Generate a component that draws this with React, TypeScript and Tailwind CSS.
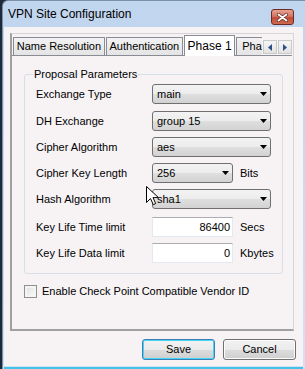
import React from 'react';

type Row = {
  label: string;
  kind: 'combo' | 'input';
  value: string;
  short?: boolean;
  unit?: string;
  mt: string;
};

const rows: Row[] = [
  { label: 'Exchange Type', kind: 'combo', value: 'main', mt: 'mt-[3px]' },
  { label: 'DH Exchange', kind: 'combo', value: 'group 15', mt: 'mt-[7px]' },
  { label: 'Cipher Algorithm', kind: 'combo', value: 'aes', mt: 'mt-[6px]' },
  { label: 'Cipher Key Length', kind: 'combo', value: '256', short: true, unit: 'Bits', mt: 'mt-[6px]' },
  { label: 'Hash Algorithm', kind: 'combo', value: 'sha1', mt: 'mt-[6px]' },
  { label: 'Key Life Time limit', kind: 'input', value: '86400', unit: 'Secs', mt: 'mt-[8px]' },
  { label: 'Key Life Data limit', kind: 'input', value: '0', unit: 'Kbytes', mt: 'mt-[6px]' },
];

const DropArrow = () => (
  <svg width="7" height="4" viewBox="0 0 7 4">
    <path d="M0 0h7L3.5 4z" fill="#000" />
  </svg>
);

const Combo = ({ value, short }: { value: string; short?: boolean }) => (
  <div
    className={`${short ? 'w-[81px]' : 'w-[119px]'} h-[20px] flex items-center justify-between pl-[4px] pr-[3px] rounded-[3px] border border-[#707070] bg-[linear-gradient(#f3f3f3_0%,#ececec_50%,#dfdfdf_50%,#d2d2d2_100%)]`}
  >
    <span>{value}</span>
    <DropArrow />
  </div>
);

const TextBox = ({ value }: { value: string }) => (
  <div className="w-[81px] h-[20px] flex items-center justify-end pr-[2px] bg-white border border-[#e3e9ef] border-t-[#abadb3]">
    {value}
  </div>
);

const Tab = ({ label, w, active }: { label: string; w: string; active?: boolean }) =>
  active ? (
    <div className={`${w} h-[21px] -mb-[1px] mr-[1px] flex items-center justify-center bg-white border border-b-0 border-[#898c95] text-[12px]`}>
      {label}
    </div>
  ) : (
    <div className={`${w} h-[18px] mr-[1px] flex items-center justify-center bg-[linear-gradient(#f2f2f2,#e4e4e4)] border border-b-0 border-[#898c95]`}>
      {label}
    </div>
  );

const ScrollBtn = ({ left }: { left?: boolean }) => (
  <div className="w-[14px] h-[14px] flex items-center justify-center bg-[linear-gradient(#f6f6f6,#e2e2e2)] border border-[#c9c9c9]">
    <svg width="4" height="7" viewBox="0 0 4 7">
      <path d={left ? 'M4 0v7L0 3.5z' : 'M0 0v7L4 3.5z'} fill="#2d4f86" />
    </svg>
  </div>
);

const WinButton = ({ label, focused }: { label: string; focused?: boolean }) => (
  <div
    className={`w-[73px] h-[21px] flex items-center justify-center rounded-[3px] border bg-[linear-gradient(#f2f2f2_0%,#ebebeb_50%,#dddddd_50%,#cfcfcf_100%)] ${
      focused ? 'border-[#3c7fb1] shadow-[inset_0_0_0_1px_#48d3fb]' : 'border-[#707070] shadow-[inset_0_0_0_1px_#fcfcfc]'
    }`}
  >
    {label}
  </div>
);

const Cursor = () => (
  <svg className="absolute left-[146px] top-[186px]" width="13" height="20" viewBox="0 0 13 20">
    <path
      d="M0.5 0.5v16l4-4 2.8 6.2 2.4-1.1-2.7-6h5.5z"
      fill="#fff"
      stroke="#000"
      strokeWidth="1"
      strokeLinejoin="miter"
    />
  </svg>
);

export default function App() {
  return (
    <div className="relative w-[305px] h-[369px] overflow-hidden bg-[#1c2a39] pl-[2px] flex font-['Liberation_Sans',Arial,sans-serif] text-[11px] text-black">
      <div className="flex-1 flex flex-col bg-[linear-gradient(#c0d5ee,#d3e2f3)] border-l border-t border-[#7d8fa6] rounded-tl-[6px]">
        {/* title bar */}
        <div className="h-[26px] flex items-center justify-between pl-[5px] pr-[11px]">
          <span className="text-[12px] leading-none">VPN Site Configuration</span>
          <div className="w-[23px] h-[16px] mt-[6px] flex items-center justify-center rounded-[3px] border border-[#6e2b25] bg-[linear-gradient(#e8a193_0%,#d47361_45%,#c24a35_55%,#cf6a4e_100%)]">
            <svg width="11" height="9" viewBox="0 0 11 9">
              <path d="M1.5 1.5l8 6M9.5 1.5l-8 6" stroke="#5a2a24" strokeWidth="3.2" strokeLinecap="round" />
              <path d="M1.5 1.5l8 6M9.5 1.5l-8 6" stroke="#fff" strokeWidth="1.8" strokeLinecap="round" />
            </svg>
          </div>
        </div>

        {/* client area */}
        <div className="flex-1 ml-[1px] mr-[2px] flex flex-col bg-[#f7f3f5]">
          <div className="mt-[6px] ml-[6px] w-[284px] h-[298px] flex flex-col border border-[#d5d5d5] border-l-[#a0a0a0] border-b-[#a0a0a0] border-l-2 border-b-2">
            {/* tab strip */}
            <div className="flex items-end pl-[1px] pt-[1px] border-b border-[#898c95] mr-[1px]">
              <Tab label="Name Resolution" w="w-[93px]" />
              <Tab label="Authentication" w="w-[78px]" />
              <Tab label="Phase 1" w="w-[52px]" active />
              <div className="w-[26px] h-[18px] flex items-center pl-[5px] bg-[linear-gradient(#f2f2f2,#e4e4e4)] border border-b-0 border-r-0 border-[#898c95] whitespace-nowrap">
                Pha
              </div>
              <div className="flex mb-[1px] ml-[1px]">
                <ScrollBtn left />
                <div className="w-[1px]" />
                <ScrollBtn />
              </div>
            </div>

            {/* tab page */}
            <fieldset className="mt-[12px] ml-[12px] w-[259px] pb-[10px] border border-[#d5dfe5] rounded-[3px] pl-[11px]">
              <legend className="ml-[-3px] px-[1px] leading-[13px]">Proposal Parameters</legend>
              {rows.map((r) => (
                <div key={r.label} className={`${r.mt} h-[20px] flex items-center`}>
                  <span className="w-[116px]">{r.label}</span>
                  {r.kind === 'combo' ? <Combo value={r.value} short={r.short} /> : <TextBox value={r.value} />}
                  {r.unit && <span className="ml-[7px]">{r.unit}</span>}
                </div>
              ))}
            </fieldset>

            <div className="mt-[9px] ml-[12px] flex items-center gap-[5px]">
              <div className="w-[13px] h-[13px] border border-[#8e8f8f] bg-[linear-gradient(135deg,#dcdcdc,#fdfdfd)] shadow-[inset_0_0_0_2px_#f4f4f4]" />
              <span>Enable Check Point Compatible Vendor ID</span>
            </div>
          </div>

          <div className="mt-[8px] flex justify-end gap-[8px] pr-[7px]">
            <WinButton label="Save" focused />
            <WinButton label="Cancel" />
          </div>
        </div>
        <div className="h-[3px] mr-[2px] ml-[1px] border-b-2 border-[#3fc3e6]" />
      </div>
      <Cursor />
    </div>
  );
}
